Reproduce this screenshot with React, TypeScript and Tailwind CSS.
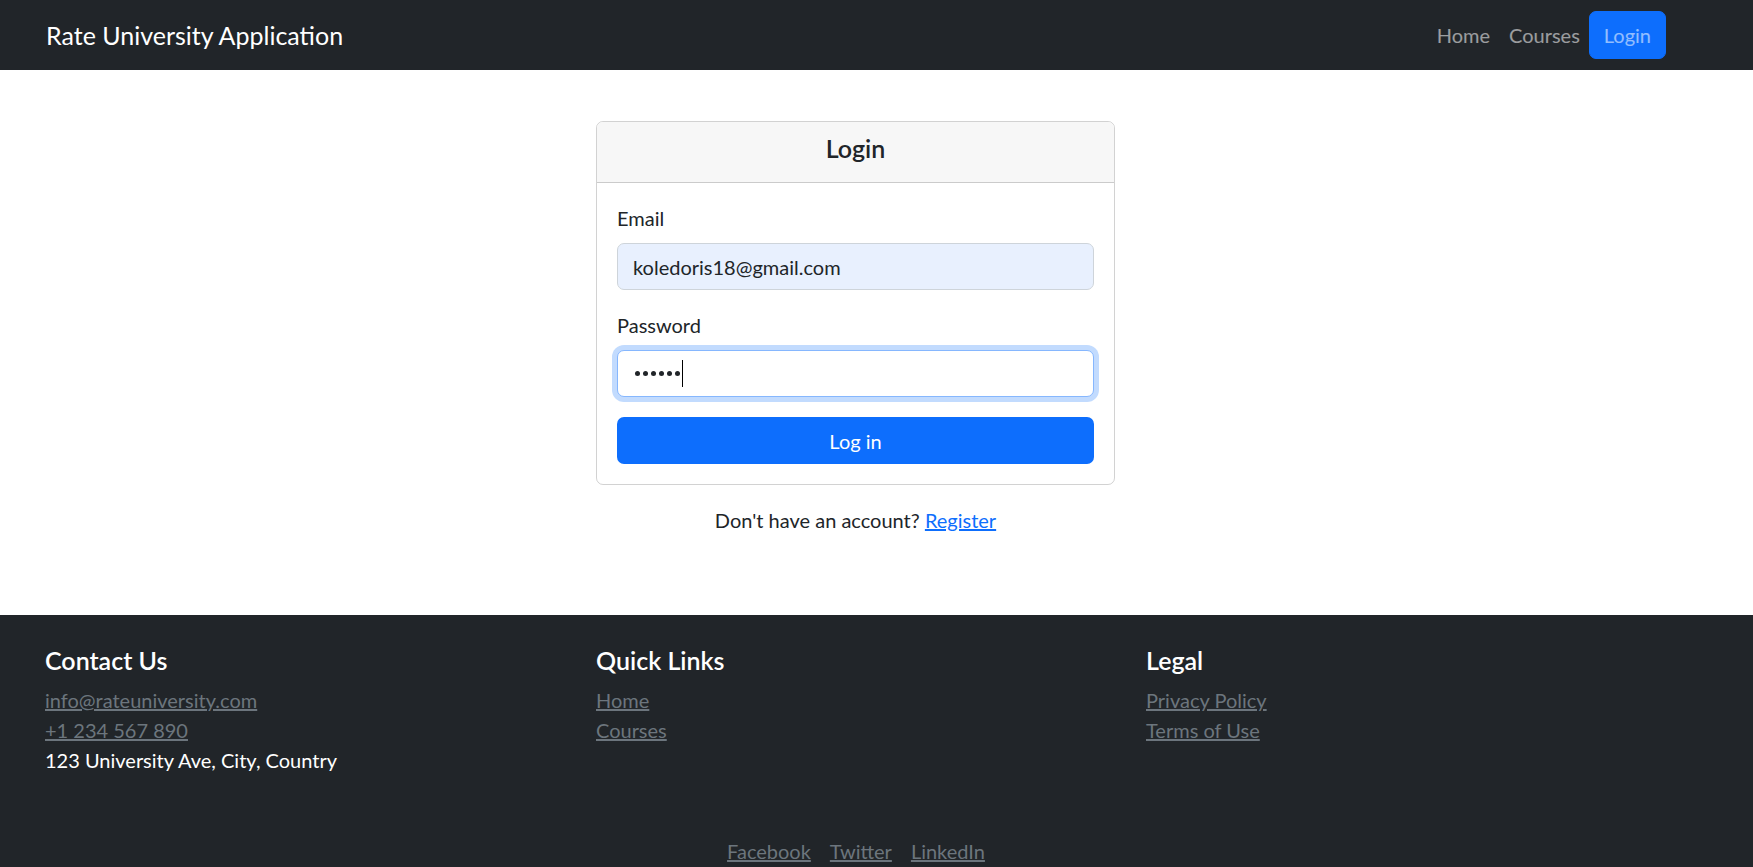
import React from 'react';

const font = { fontFamily: 'Lato, "Noto Sans", "Liberation Sans", sans-serif' };

function Navbar() {
  return (
    <nav className="h-[70px] bg-[#212529] flex items-center justify-between pl-[46px] pr-[87px]">
      <a href="#" className="text-white text-[25px] leading-[30px]">
        Rate University Application
      </a>
      <div className="flex items-center text-[20px] leading-[30px]">
        <a href="#" className="text-white/55 mr-[19px]">Home</a>
        <a href="#" className="text-white/55 mr-[9px]">Courses</a>
        <a href="#" className="bg-[#0d6efd] text-white/55 rounded-[7px] px-[14px] py-[8px] border border-[#0d6efd]">
          Login
        </a>
      </div>
    </nav>
  );
}

function LoginCard() {
  return (
    <div className="w-[519px] ml-[596px]">
      <div className="border border-black/[0.175] rounded-[7px] overflow-hidden">
        <div className="bg-[#f7f7f7] border-b border-black/[0.175] pt-[11px] pb-[19px] text-center">
          <h3 className="text-[25px] leading-[30px] font-semibold text-[#212529]">Login</h3>
        </div>
        <div className="p-[20px]">
          <label className="block text-[20px] leading-[30px] text-[#212529] mb-[10px]">Email</label>
          <input
            type="email"
            readOnly
            value="koledoris18@gmail.com"
            className="block w-full h-[47px] px-[15px] text-[20px] leading-[30px] text-[#212529] bg-[#e8f0fe] border border-[#ced4da] rounded-[7px] outline-none"
            style={font}
          />
          <label className="block text-[20px] leading-[30px] text-[#212529] mt-[20px] mb-[10px]">Password</label>
          <div className="h-[47px] pl-[17px] flex items-center bg-white border border-[#86b7fe] rounded-[7px] shadow-[0_0_0_5px_rgba(13,110,253,0.25)]">
            <div className="flex items-center gap-[3px]">
              <span className="w-[5px] h-[5px] rounded-full bg-[#212529]"></span>
              <span className="w-[5px] h-[5px] rounded-full bg-[#212529]"></span>
              <span className="w-[5px] h-[5px] rounded-full bg-[#212529]"></span>
              <span className="w-[5px] h-[5px] rounded-full bg-[#212529]"></span>
              <span className="w-[5px] h-[5px] rounded-full bg-[#212529]"></span>
              <span className="w-[5px] h-[5px] rounded-full bg-[#212529]"></span>
            </div>
            <span className="w-px h-[27px] bg-black ml-[2px]"></span>
          </div>
          <button className="mt-[20px] w-full h-[47px] bg-[#0d6efd] text-white text-[20px] leading-[30px] rounded-[7px]">
            Log in
          </button>
        </div>
      </div>
      <p className="mt-[20px] text-center">
        Don't have an account?{' '}
        <a href="#" className="text-[#0d6efd] underline">Register</a>
      </p>
    </div>
  );
}

function Footer() {
  return (
    <footer className="bg-[#212529] pt-[30px] pb-[30px]">
      <div className="grid grid-cols-[551px_550px_1fr] pl-[45px]">
        <div>
          <h5 className="text-white text-[25px] leading-[30px] font-semibold mb-[10px]">Contact Us</h5>
          <a href="#" className="block w-fit text-[#6c757d] underline">info@rateuniversity.com</a>
          <a href="#" className="block w-fit text-[#6c757d] underline">+1 234 567 890</a>
          <p className="text-white">123 University Ave, City, Country</p>
        </div>
        <div>
          <h5 className="text-white text-[25px] leading-[30px] font-semibold mb-[10px]">Quick Links</h5>
          <a href="#" className="block w-fit text-[#6c757d] underline">Home</a>
          <a href="#" className="block w-fit text-[#6c757d] underline">Courses</a>
        </div>
        <div>
          <h5 className="text-white text-[25px] leading-[30px] font-semibold mb-[10px]">Legal</h5>
          <a href="#" className="block w-fit text-[#6c757d] underline">Privacy Policy</a>
          <a href="#" className="block w-fit text-[#6c757d] underline">Terms of Use</a>
        </div>
      </div>
      <div className="mt-[61px] flex justify-center gap-[19px] pr-[41px]">
        <a href="#" className="text-[#6c757d] underline">Facebook</a>
        <a href="#" className="text-[#6c757d] underline">Twitter</a>
        <a href="#" className="text-[#6c757d] underline">LinkedIn</a>
      </div>
    </footer>
  );
}

export default function App() {
  return (
    <div className="min-h-screen bg-white text-[20px] leading-[30px] text-[#212529]" style={font}>
      <Navbar />
      <main className="pt-[51px] pb-[80px]">
        <LoginCard />
      </main>
      <Footer />
    </div>
  );
}
